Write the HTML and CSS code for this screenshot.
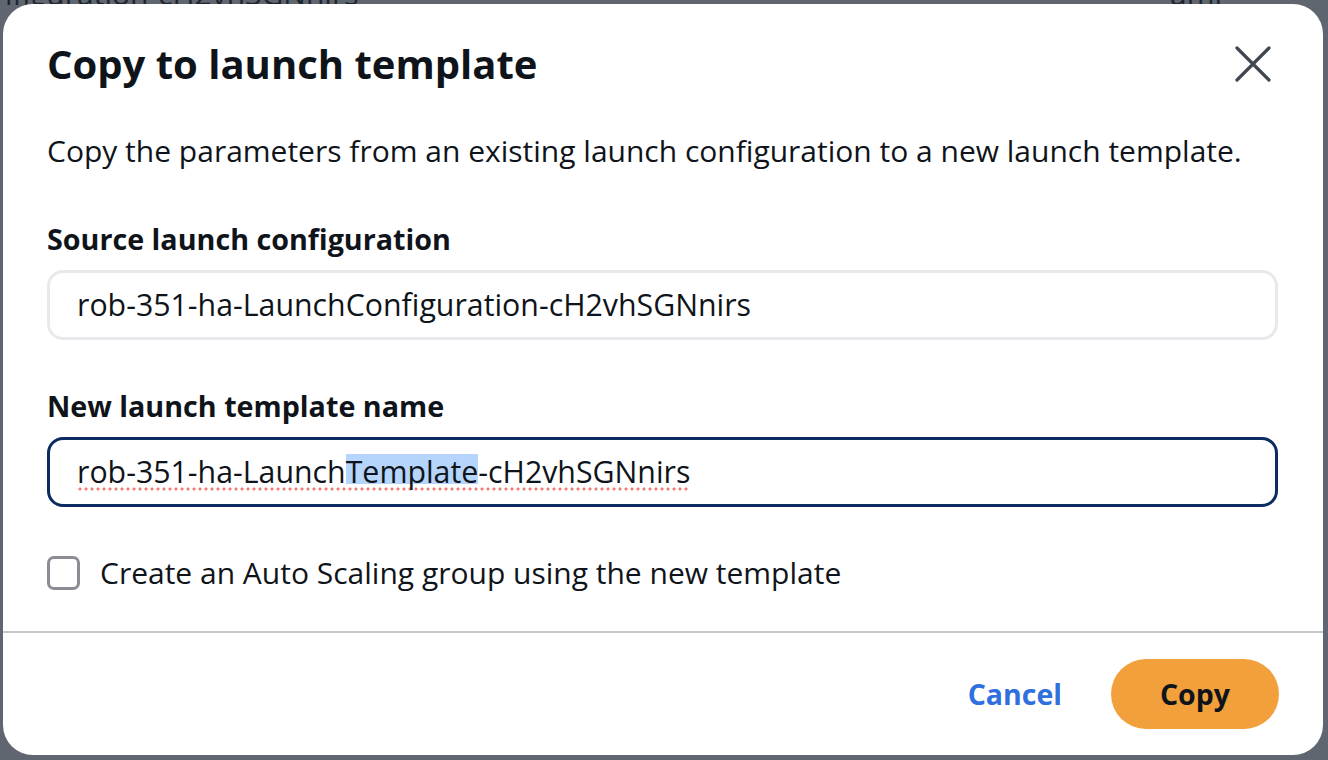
FILE: index.html
```html
<!doctype html>
<html>
<head>
<meta charset="utf-8">
<title>Copy to launch template</title>
<link rel="stylesheet" href="styles.css">
</head>
<body>
	<div class="behind">
		<span class="behind-left">nfiguration-cH2vhSGNnirs</span>
		<span class="behind-right">ami-01d0c4</span>
	</div>

	<div class="modal" role="dialog">
		<div class="modal-header">
			<h2 class="modal-title">Copy to launch template</h2>
			<button class="close" aria-label="Close">
				<svg width="36" height="36" viewBox="0 0 36 36"><path d="M2 2 L34 34 M34 2 L2 34" stroke="#414750" stroke-width="3.2" stroke-linecap="round" fill="none"/></svg>
			</button>
		</div>

		<div class="modal-body">
			<p class="intro">Copy the parameters from an existing launch configuration to a new launch template.</p>

			<div class="field">
				<label class="field-label">Source launch configuration</label>
				<div class="input">rob-351-ha-LaunchConfiguration-cH2vhSGNnirs</div>
			</div>

			<div class="field">
				<label class="field-label">New launch template name</label>
				<div class="input focused"><span class="misspelled">rob-351-ha-Launch<span class="selected">Template</span>-cH2vhSGNnirs</span></div>
			</div>

			<div class="check-row">
				<span class="checkbox"></span>
				<span class="check-label">Create an Auto Scaling group using the new template</span>
			</div>
		</div>

		<div class="modal-footer">
			<a class="cancel" href="#">Cancel</a>
			<button class="primary">Copy</button>
		</div>
	</div>
</body>
</html>
```
FILE: styles.css
```css
*{margin:0;padding:0;box-sizing:border-box;}
body{
	width:1328px;
	height:760px;
	overflow:hidden;
	position:relative;
	background:#5f6670;
	font-family:"Open Sans",sans-serif;
	color:#0f141a;
}

/* page under the overlay */
.behind span{
	position:absolute;
	top:-22px;
	font-size:30px;
	line-height:32px;
	color:#1f252d;
}
.behind-left{left:-6px;}
.behind-right{left:1170px;}

.modal{
	position:relative;
	z-index:2;
	width:1320px;
	margin:4px 0 0 3px;
	background:#fff;
	border-radius:30px;
	display:flex;
	flex-direction:column;
}

.modal-header{
	display:flex;
	align-items:center;
	justify-content:space-between;
	padding:36px 52px 0 44px;
}
.modal-title{
	font-size:40px;
	line-height:48px;
	font-weight:700;
}
.close{
	border:0;
	background:none;
	width:36px;
	height:36px;
	display:flex;
}

.modal-body{
	padding:0 45px 0 44px;
}
.intro{
	margin-top:43px;
	font-size:30px;
	line-height:40px;
}

.field{margin-top:50px;}
.field + .field{margin-top:48px;}
.field-label{
	display:block;
	font-size:28.7px;
	line-height:36px;
	font-weight:700;
}
.input{
	margin-top:13px;
	height:70px;
	border:3px solid #e9e9ed;
	border-radius:16px;
	padding:0 27px;
	font-size:30.3px;
	line-height:64px;
	white-space:nowrap;
}
.input.focused{border-color:#0d2a61;}

.misspelled{
	background:radial-gradient(circle,#f07d76 1.3px,transparent 1.8px) 0 100% / 6px 6px repeat-x;
}
.selected{
	background:linear-gradient(#b5d5fc,#b5d5fc) 0 3px / 100% 30px no-repeat;
}

.check-row{
	margin-top:46px;
	display:flex;
	align-items:center;
	gap:20px;
	height:40px;
}
.checkbox{
	width:33px;
	height:34px;
	border:3px solid #8c8c94;
	border-radius:7px;
}
.check-label{
	font-size:30px;
	line-height:40px;
}

.modal-footer{
	margin-top:38px;
	border-top:2px solid #c6c6cd;
	padding:26px 44px 26px 0;
	display:flex;
	justify-content:flex-end;
	align-items:center;
	gap:49px;
}
.cancel{
	font-size:28.5px;
	font-weight:700;
	color:#2f6fde;
	text-decoration:none;
	line-height:70px;
}
.primary{
	height:70px;
	padding:0 49px;
	border:0;
	border-radius:35px;
	background:#f1a03b;
	font-family:"Open Sans",sans-serif;
	font-size:28.5px;
	font-weight:700;
	line-height:70px;
	color:#0f141a;
}
```
